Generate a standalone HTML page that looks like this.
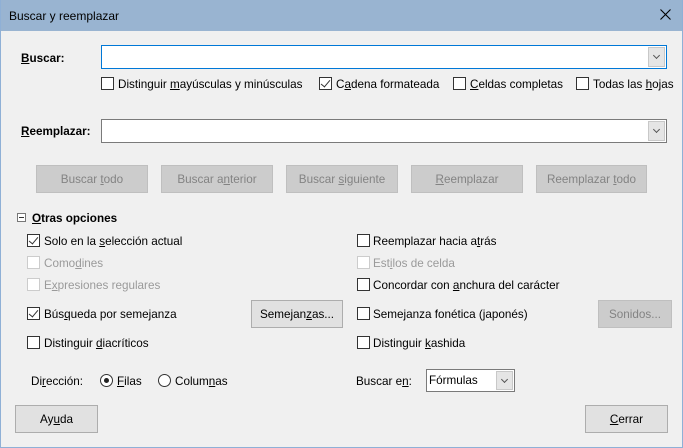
<!DOCTYPE html>
<html><head><meta charset="utf-8"><style>
*{box-sizing:border-box;margin:0;padding:0}
body{width:683px;height:448px;overflow:hidden;background:#f0f0f0;font-family:"Liberation Sans",sans-serif;font-size:11.7px;color:#000;position:relative}
.a{position:absolute;white-space:nowrap}
.win{position:absolute;left:0;top:0;width:683px;height:448px;border:1px solid #8fb0d6;border-top:none}
.title{position:absolute;left:0;top:0;width:683px;height:31px;background:#99b4d1}
.cb{position:absolute;width:13px;height:13px;border:1px solid #333;background:#fff}
.cb.d{border-color:#ccc}
.cb.c::after{content:"";position:absolute;left:3px;top:0px;width:4px;height:8px;border:solid #333;border-width:0 1.4px 1.4px 0;transform:rotate(40deg)}
.lb{position:absolute;white-space:nowrap;line-height:14px;margin-top:1px}
.g{color:#9a9a9a}
.btn{position:absolute;height:28px;border:1px solid #adadad;background:#e1e1e1;text-align:center;line-height:27px}
.btn.d{background:#cccccc;border-color:#bfbfbf;color:#838383}
.inp{position:absolute;background:#fff;border:1px solid #7a7a7a}
.dd{position:absolute;width:17px;top:1px;bottom:1px;right:1px;background:#e5e5e5;border:1px solid #c8c8c8}
.dd::after{content:"";position:absolute;left:5px;top:5px;width:4px;height:4px;border:solid #555;border-width:0 1px 1px 0;transform:rotate(45deg)}
u{text-decoration:underline}
.rad{position:absolute;width:13px;height:13px;border:1px solid #333;border-radius:50%;background:#fff}
</style></head><body>
<div class="title"></div>
<div class="a" style="left:9px;top:9px;font-size:12px">Buscar y reemplazar</div>
<svg class="a" style="left:660px;top:9px" width="11" height="11"><path d="M0.5 0.5L10.5 10.5M10.5 0.5L0.5 10.5" stroke="#000" stroke-width="1.1"/></svg>
<div class="win"></div>

<div class="lb" style="left:21px;top:51px;font-weight:bold"><u>B</u>uscar:</div>
<div class="inp" style="left:101px;top:45px;width:566px;height:24px;border-color:#0078d7"><div class="dd"></div></div>

<div class="cb" style="left:101px;top:77px"></div><div class="lb" style="left:118px;top:77px">Distinguir <u>m</u>ayúsculas y minúsculas</div>
<div class="cb c" style="left:319px;top:77px"></div><div class="lb" style="left:336px;top:77px">C<u>a</u>dena formateada</div>
<div class="cb" style="left:453px;top:77px"></div><div class="lb" style="left:470px;top:77px"><u>C</u>eldas completas</div>
<div class="cb" style="left:576px;top:77px"></div><div class="lb" style="left:593px;top:77px">Todas las <u>h</u>ojas</div>

<div class="lb" style="left:21px;top:124px;font-weight:bold"><u>R</u>eemplazar:</div>
<div class="inp" style="left:101px;top:119px;width:566px;height:24px"><div class="dd"></div></div>

<div class="btn d" style="left:36px;top:165px;width:112px">Buscar <u>t</u>odo</div>
<div class="btn d" style="left:161px;top:165px;width:112px">Buscar a<u>n</u>terior</div>
<div class="btn d" style="left:286px;top:165px;width:112px">Buscar <u>s</u>iguiente</div>
<div class="btn d" style="left:411px;top:165px;width:112px"><u>R</u>eemplazar</div>
<div class="btn d" style="left:536px;top:165px;width:111px">Reemplazar <u>t</u>odo</div>

<div class="a" style="left:17px;top:213px;width:9px;height:9px;border:1px solid #777;background:#fff"><div style="position:absolute;left:1px;top:3px;width:5px;height:1px;background:#333"></div></div>
<div class="lb" style="left:32px;top:211px;font-weight:bold"><u>O</u>tras opciones</div>

<div class="cb c" style="left:27px;top:234px"></div><div class="lb" style="left:44px;top:234px">Solo en la <u>s</u>elección actual</div>
<div class="cb d" style="left:27px;top:256px"></div><div class="lb g" style="left:44px;top:256px">Como<u>d</u>ines</div>
<div class="cb d" style="left:27px;top:278px"></div><div class="lb g" style="left:44px;top:278px">E<u>x</u>presiones regulares</div>
<div class="cb c" style="left:27px;top:307px"></div><div class="lb" style="left:44px;top:307px">Bús<u>q</u>ueda por semejanza</div>
<div class="cb" style="left:27px;top:336px"></div><div class="lb" style="left:44px;top:336px">Distinguir <u>d</u>iacríticos</div>
<div class="btn" style="left:251px;top:300px;width:92px">Semejan<u>z</u>as...</div>

<div class="cb" style="left:357px;top:234px"></div><div class="lb" style="left:373px;top:234px">Reemplazar hacia a<u>t</u>rás</div>
<div class="cb d" style="left:357px;top:256px"></div><div class="lb g" style="left:373px;top:256px">Est<u>i</u>los de celda</div>
<div class="cb" style="left:357px;top:278px"></div><div class="lb" style="left:373px;top:278px">Concordar con <u>a</u>nchura del carácter</div>
<div class="cb" style="left:357px;top:307px"></div><div class="lb" style="left:373px;top:307px">Semejanza fonética (<u>j</u>aponés)</div>
<div class="cb" style="left:357px;top:336px"></div><div class="lb" style="left:373px;top:336px">Distinguir <u>k</u>ashida</div>
<div class="btn d" style="left:598px;top:300px;width:74px">Sonidos...</div>

<div class="lb" style="left:31px;top:374px">Di<u>r</u>ección:</div>
<div class="rad" style="left:100px;top:374px"><div style="position:absolute;left:3px;top:3px;width:5px;height:5px;border-radius:50%;background:#222"></div></div>
<div class="lb" style="left:117px;top:374px"><u>F</u>ilas</div>
<div class="rad" style="left:158px;top:374px"></div>
<div class="lb" style="left:175px;top:374px">Colum<u>n</u>as</div>

<div class="lb" style="left:356px;top:374px">Buscar e<u>n</u>:</div>
<div class="inp" style="left:426px;top:369px;width:89px;height:23px"><div class="lb" style="left:2px;top:3px">Fórmulas</div><div class="dd"></div></div>

<div class="btn" style="left:15px;top:405px;width:83px">Ay<u>u</u>da</div>
<div class="btn" style="left:585px;top:405px;width:83px"><u>C</u>errar</div>
</body></html>
